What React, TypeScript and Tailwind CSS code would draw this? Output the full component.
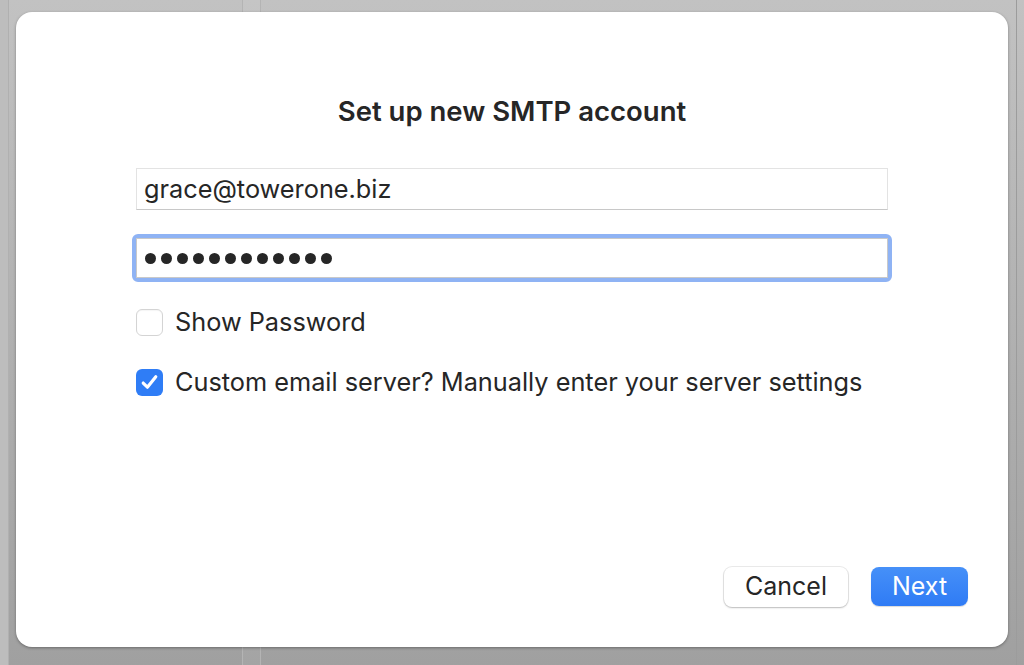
import React, { useState } from "react";

const font = { fontFamily: "Inter, 'Liberation Sans', sans-serif" };

const Checkbox = ({ checked, onChange }: { checked: boolean; onChange: () => void }) => (
  <button
    onClick={onChange}
    className={
      checked
        ? "flex h-[27px] w-[27px] shrink-0 items-center justify-center rounded-[6px] bg-[#2f7df6]"
        : "h-[27px] w-[27px] shrink-0 rounded-[6px] border border-[#d4d4d4] bg-white shadow-[inset_0_1px_1px_rgba(0,0,0,0.04)]"
    }
  >
    {checked && (
      <svg width="21" height="21" viewBox="0 0 20 20" fill="none">
        <path d="M4 10.5 L8 14.5 L16 4.5" stroke="white" strokeWidth="3" strokeLinecap="round" strokeLinejoin="round" />
      </svg>
    )}
  </button>
);

export default function App() {
  const [showPassword, setShowPassword] = useState(false);
  const [custom, setCustom] = useState(true);

  return (
    <div className="relative h-[665px] w-[1024px] overflow-hidden bg-[#a9a9a9] text-[#262626]" style={font}>
      {/* background window behind the sheet */}
      <div className="flex h-full bg-gradient-to-b from-[#c2c2c2] to-[#a0a0a0]">
        <div className="w-[8px] bg-[#bdbdbd]" />
        <div className="w-[234px] border-l border-[#b0b0b0]" />
        <div className="w-[18px] border-l border-[#b4b4b4] bg-[#ffffff0d]" />
        <div className="flex-1 border-l border-[#b4b4b4]" />
        <div className="w-[8px] border-l border-[#9c9c9c]" />
      </div>

      {/* sheet */}
      <div className="absolute left-[16px] top-[12px] flex h-[635px] w-[992px] flex-col rounded-[16px] bg-white shadow-[0_1px_3px_rgba(0,0,0,0.35)]">
        <h1 className="mt-[79px] text-center text-[27.5px] font-semibold leading-[40px]">
          Set up new SMTP account
        </h1>

        <div className="mt-[37px] flex flex-col px-[120px]">
          <div className="flex h-[42px] items-center border border-[#e3e3e3] border-b-[#c8c8c8] bg-white px-[7px] text-[25.3px]">
            grace@towerone.biz
          </div>

          <div className="mt-[24px] -mx-[4px] rounded-[6px] border-[4px] border-[#8fb3f4]">
            <div className="flex h-[40px] items-center gap-[5px] border border-[#c9c9c9] bg-white px-[8px]">
              {Array.from({ length: 12 }).map((_, i) => (
                <span key={i} className="h-[11px] w-[11px] rounded-full bg-[#262626]" />
              ))}
            </div>
          </div>

          <label className="mt-[26px] flex h-[28px] items-center gap-[12px] text-[25.3px]">
            <Checkbox checked={showPassword} onChange={() => setShowPassword(!showPassword)} />
            Show Password
          </label>

          <label className="mt-[32px] flex h-[28px] items-center gap-[12px] text-[25.3px]">
            <Checkbox checked={custom} onChange={() => setCustom(!custom)} />
            Custom email server? Manually enter your server settings
          </label>
        </div>

        <div className="mt-auto mb-[40px] flex items-start justify-end gap-[23px] pr-[40px]">
          <button className="h-[40px] w-[124px] rounded-[8px] bg-white text-[25px] shadow-[0_0_0_1px_rgba(0,0,0,0.08),0_1px_2px_rgba(0,0,0,0.2)]">
            Cancel
          </button>
          <button className="h-[39px] w-[97px] rounded-[8px] bg-gradient-to-b from-[#4690f8] to-[#2f7bf5] text-[25px] text-white shadow-[0_1px_1px_rgba(0,0,0,0.15)]">
            Next
          </button>
        </div>
      </div>
    </div>
  );
}
